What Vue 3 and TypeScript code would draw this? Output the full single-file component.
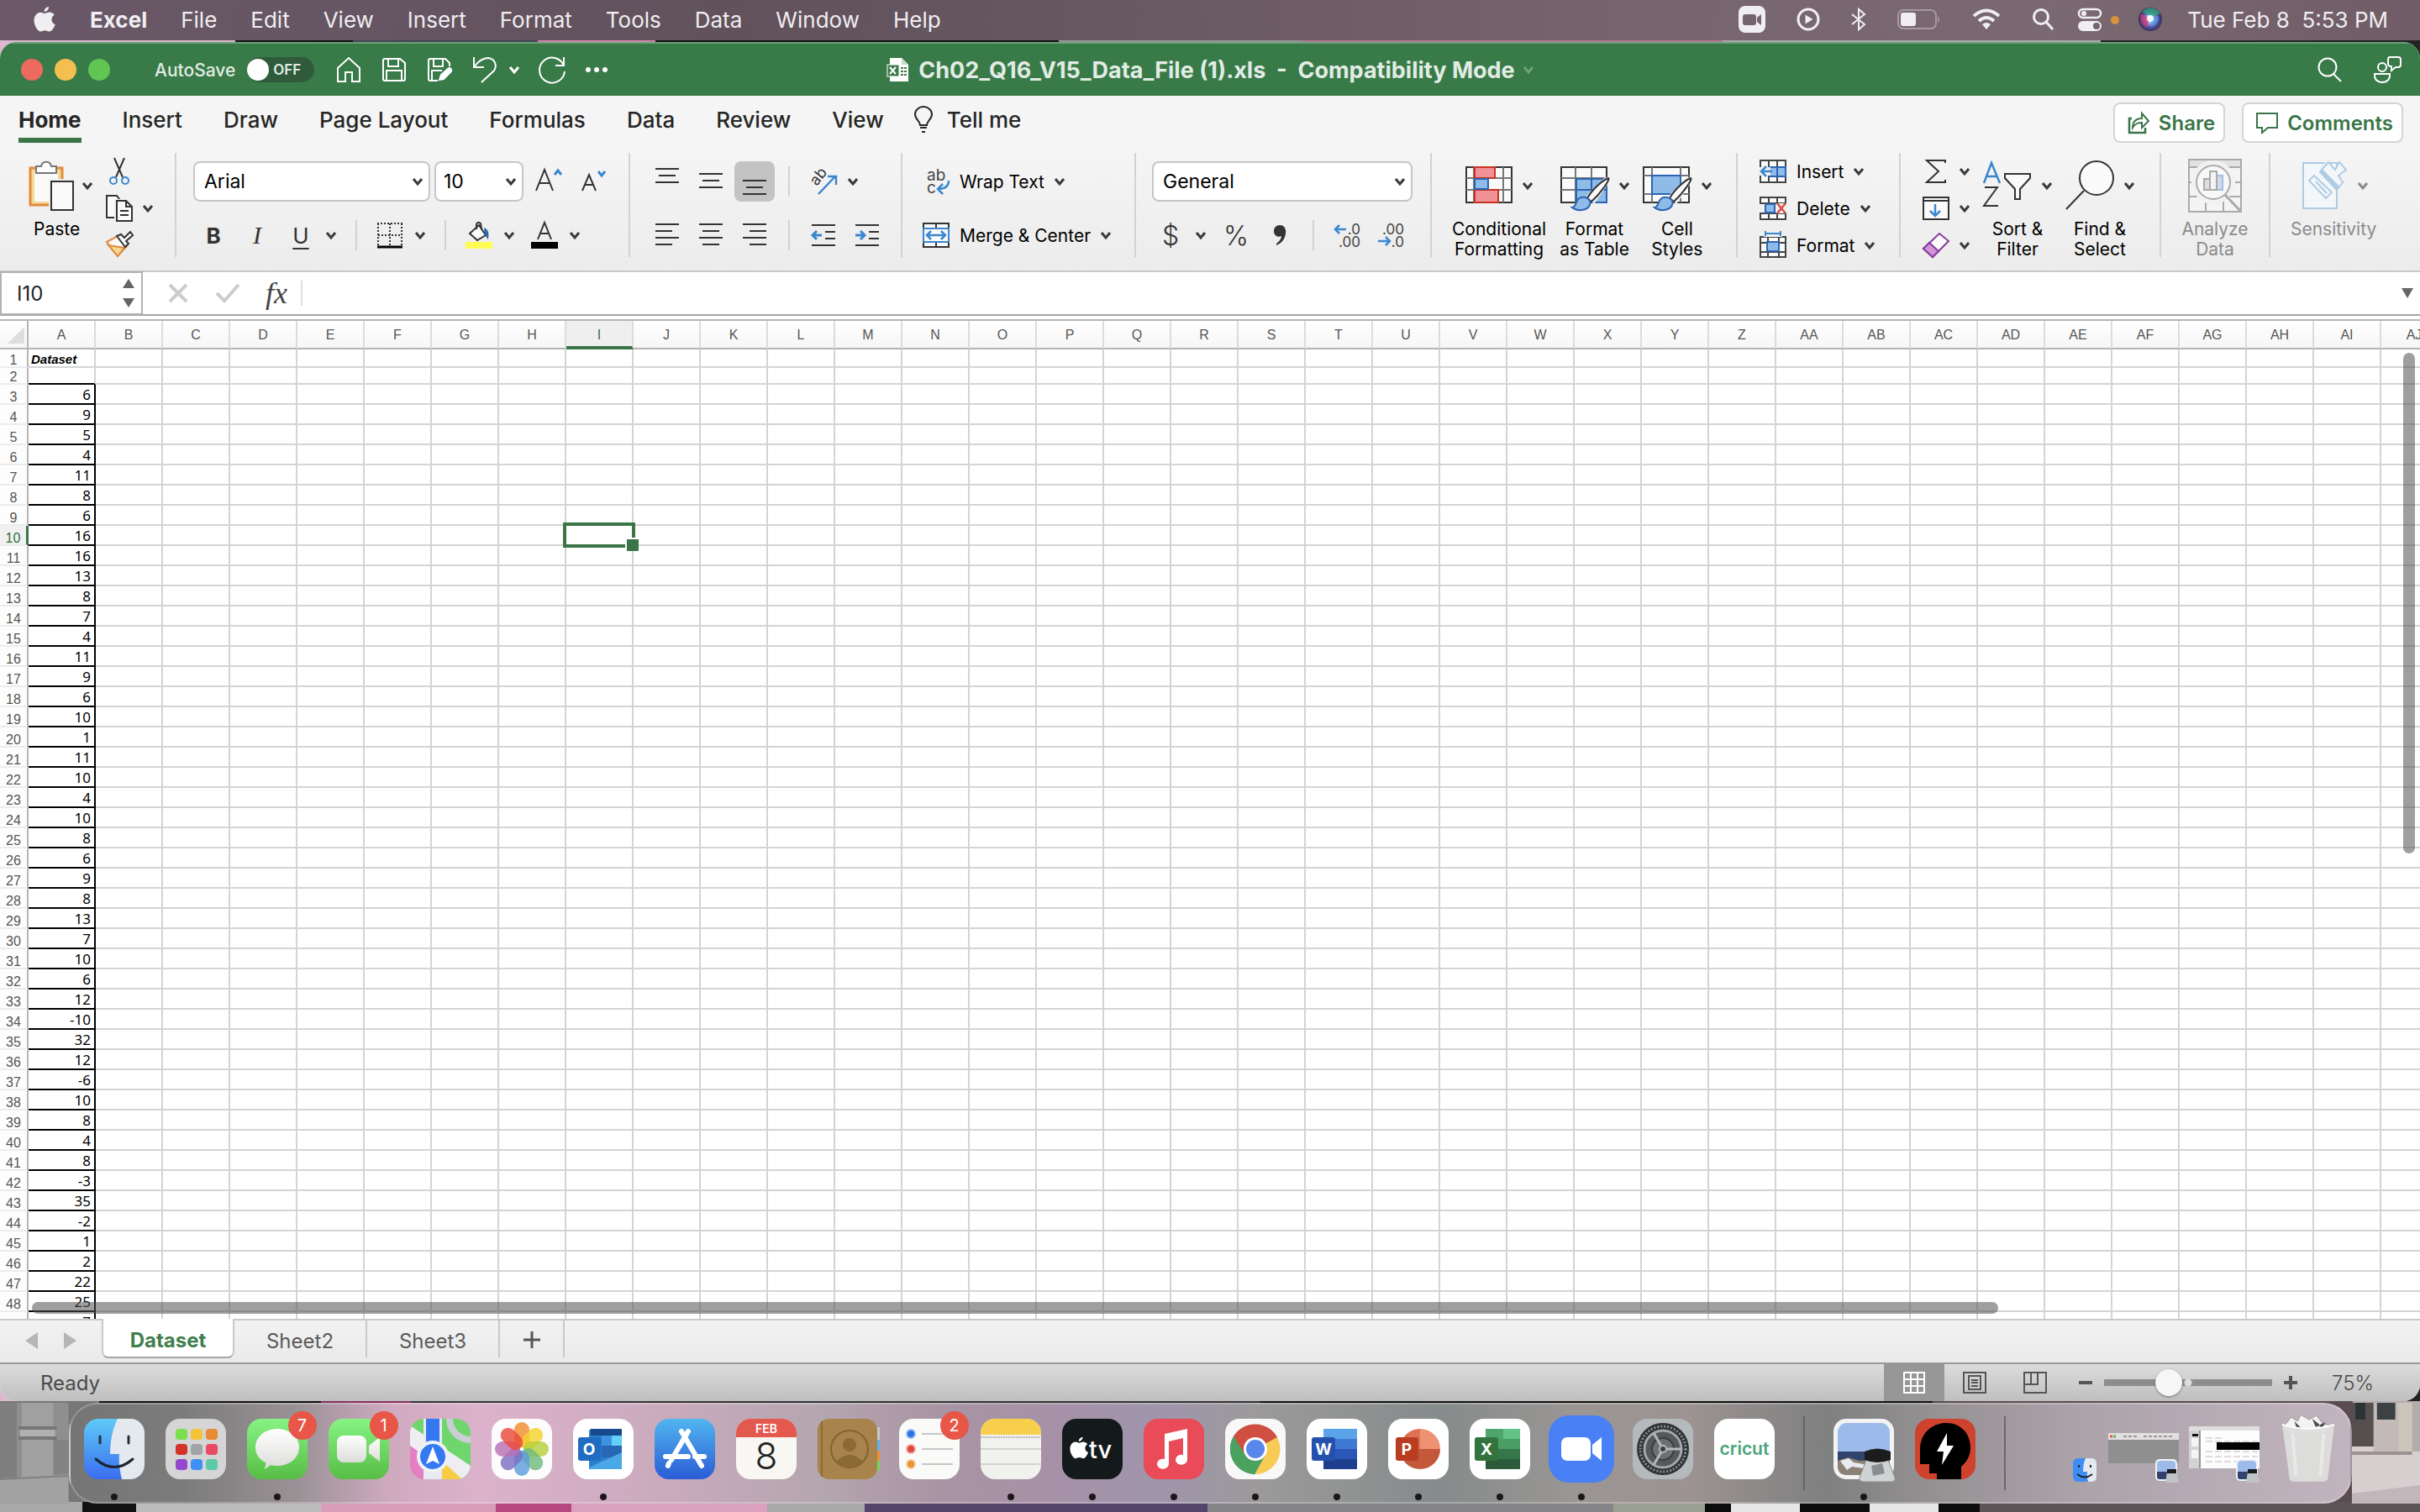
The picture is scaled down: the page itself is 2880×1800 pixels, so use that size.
<script setup lang="ts">
import { h, ref } from 'vue'

const menus = ['File', 'Edit', 'View', 'Insert', 'Format', 'Tools', 'Data', 'Window', 'Help']
const tabs = ['Home', 'Insert', 'Draw', 'Page Layout', 'Formulas', 'Data', 'Review', 'View']
const sheets = ['Dataset', 'Sheet2', 'Sheet3']
const activeTab = ref('Home')
const activeSheet = ref('Dataset')
const autoSave = ref(false)
const font = ref('Arial')
const size = ref('10')
const format = ref('General')
const cell = ref('I10')
const formula = ref('')
const zoom = ref(36)

const values = [
  6, 9, 5, 4, 11, 8, 6, 16, 16, 13, 8, 7, 4, 11, 9, 6, 10, 1, 11, 10, 4, 10, 8, 6, 9, 8, 13, 7, 10, 6,
  12, -10, 32, 12, -6, 10, 8, 4, 8, -3, 35, -2, 1, 2, 22, 25, 7,
]
const columnName = (i: number): string => (i < 26 ? '' : 'A') + String.fromCharCode(65 + (i % 26))
const columns = Array.from({ length: 36 }, (_, i) => columnName(i))
const rows = Array.from({ length: 49 }, (_, i) => ({
  n: i + 1,
  text: i === 0 ? 'Dataset' : i === 1 ? '' : String(values[i - 2]),
}))

const Chev = () =>
  h('svg', { class: 'chev', width: 12, height: 10, viewBox: '0 0 12 10', fill: 'none' }, [
    h('path', { d: 'M1 2l5 6 5-6', stroke: 'currentColor', 'stroke-width': 3 }),
  ])

const lines = (p: { xs: number[][]; top: number }) =>
  h(
    'svg',
    { width: 28, height: 48, viewBox: '0 0 28 48' },
    p.xs.map((r, i) => h('rect', { x: r[0], y: p.top + i * 8, width: r[1], height: 2, fill: '#333' })),
  )
const Lines = Object.assign(lines, { props: ['xs', 'top'] })

const petals = [
  ['#f08c2e', 0], ['#f2d32c', 45], ['#b5d03c', 90], ['#6fbb7c', 135],
  ['#5d9fdb', 180], ['#7d6fc4', 225], ['#bb6fb4', 270], ['#ea4b39', 315],
] as [string, number][]
const pads = ['#7be04f', '#f3c33c', '#e98a35', '#d23326', '#9fa4a6', '#ea4a62', '#9448cf', '#3f8ff5', '#5cc9a8']
const spokes = [0, 120, 240]
</script>

<template>
  <div class="desktop">
    <header class="menubar">
      <svg width="26" height="32" viewBox="0 0 26 32" fill="#f0eef0"><path d="M18 1c.3 3-2.600 6-5.300 6C12.300 4 15 1.500 18 1zM13.200 9c1.400 0 3-1.500 5.600-1.500 2 0 4.400 1 5.900 3.200-4.900 3-4 9.600 1 11.500-1.200 3.400-4 8.300-6.900 8.300-2 0-2.800-1.300-5.300-1.300s-3.500 1.300-5.300 1.300C5 30.500.500 23.500.500 17.500.500 11.500 4.300 7.700 8 7.700c2.300 0 4 1.300 5.200 1.300z" /></svg>
      <nav class="menus">
        <button class="app-name" type="button">Excel</button>
        <button v-for="m in menus" :key="m" type="button">{{ m }}</button>
      </nav>
      <div class="extras">
        <svg width="32" height="32" viewBox="0 0 32 32"><rect width="32" height="32" rx="8" fill="#f0eef0" /><rect x="5" y="10" width="16" height="13" rx="3" fill="#75646e" /><path d="M22 14l5-4v13l-5-4z" fill="#75646e" /></svg>
        <svg width="28" height="28" viewBox="0 0 28 28"><circle cx="14" cy="14" r="12" fill="none" stroke="#f0eef0" stroke-width="3" /><path d="M10.500 8.500v11l9-5.500z" fill="#f0eef0" /></svg>
        <svg width="18" height="28" viewBox="0 0 18 28" fill="none" stroke="#f0eef0" stroke-width="2"><path d="M1 8l15 12-7 6V2l7 6L1 20" /></svg>
        <svg width="52" height="24" viewBox="0 0 52 24"><rect x="1" y="1" width="45" height="22" rx="6" fill="none" stroke="#a898a1" stroke-width="2" /><rect x="4" y="4" width="18" height="16" rx="3" fill="#f0eef0" /><path d="M48 8q4 4 0 8z" fill="#a898a1" /></svg>
        <svg width="34" height="26" viewBox="0 0 34 26" fill="none" stroke="#f0eef0" stroke-width="4"><path d="M2 9q15-13 30 0M8 15q9-8 18 0" /><path d="M12 19q5-4 10 0l-5 6z" fill="#f0eef0" stroke="none" /></svg>
        <svg width="26" height="26" viewBox="0 0 26 26" fill="none" stroke="#f0eef0" stroke-width="3"><circle cx="11" cy="10" r="8.500" /><path d="M17 16l8 9" /></svg>
        <svg class="cc" width="50" height="28" viewBox="0 0 50 28"><rect x="1" y="2" width="26" height="10" rx="5" fill="none" stroke="#f0eef0" stroke-width="2.500" /><circle cx="7" cy="7" r="3" fill="#f0eef0" /><rect x="0" y="16" width="28" height="12" rx="6" fill="#f0eef0" /><circle cx="22" cy="22" r="4" fill="#75646e" /><circle cx="44" cy="15" r="5" fill="#d8933c" /></svg>
        <svg width="30" height="30" viewBox="0 0 30 30"><defs><radialGradient id="siri"><stop offset="0" stop-color="#fff" /><stop offset=".35" stop-color="#8fa6e6" /><stop offset=".7" stop-color="#4b4f9a" /><stop offset="1" stop-color="#3b2f5d" /></radialGradient></defs><circle cx="15" cy="15" r="14" fill="url(#siri)" /><path d="M5 6a14 14 0 0 1 22 2l-9 4z" fill="#2fa87a" opacity=".75" /><path d="M4 8l10 6-3 11Q1 19 4 8z" fill="#d23a72" opacity=".75" /><path d="M14 13l11-2q1 10-8 12z" fill="#4a9de8" opacity=".6" /><circle cx="15" cy="14" r="4" fill="#fff" opacity=".9" /></svg>
        <time>Tue Feb 8&nbsp; 5:53 PM</time>
      </div>
    </header>

    <main class="window">
      <div class="titlebar">
        <div class="title-left">
          <div class="lights">
            <button type="button" class="light red" aria-label="Close"></button>
            <button type="button" class="light amber" aria-label="Minimise"></button>
            <button type="button" class="light lime" aria-label="Zoom"></button>
          </div>
          <label class="autosave">AutoSave
            <span class="switch"><input v-model="autoSave" type="checkbox" /><span class="off">OFF</span></span>
          </label>
          <div class="quick">
            <button type="button" aria-label="Home"><svg width="32" height="32" viewBox="0 0 32 32"><path d="M3 14L16 2l13 12v16h-9V19h-8v11H3z" /></svg></button>
            <button type="button" aria-label="Save"><svg width="32" height="32" viewBox="0 0 32 32"><path d="M3 5q0-2 2-2h18l6 5v19q0 2-2 2H5q-2 0-2-2zM9 3v9h12V3M7 29V17h18v12" /></svg></button>
            <button type="button" aria-label="Save as"><svg width="32" height="32" viewBox="0 0 32 32"><path d="M14 29H5q-2 0-2-2V5q0-2 2-2h18l5 5v4M9 3v9h11V3M7 29V17h12" /><path d="M16 28l2-6 9-8q4 0 3 4l-9 9z" fill="#fff" /></svg></button>
            <button type="button" class="undo" aria-label="Undo"><svg width="32" height="32" viewBox="0 0 32 32"><path d="M3 1v12h12M3 13C8 6 13 2 20 2c8 1 11 9 7 15L12 31" /></svg><Chev /></button>
            <button type="button" aria-label="Redo"><svg width="34" height="34" viewBox="0 0 34 34"><path d="M31 2v10H21M31 12A15 15 0 1 0 32 19" /></svg></button>
            <button type="button" aria-label="More"><svg width="28" height="8" viewBox="0 0 28 8"><g fill="#fff" stroke="none"><circle cx="4" cy="4" r="3" /><circle cx="14" cy="4" r="3" /><circle cx="24" cy="4" r="3" /></g></svg></button>
          </div>
        </div>
        <h1 class="doc">
          <svg width="28" height="30" viewBox="0 0 28 30"><path d="M4 1h14l8 8v20H4z" fill="#fff" /><path d="M18 1l8 8h-8z" fill="#c9ddce" /><rect x="1" y="9" width="14" height="14" fill="#3b7b4a" stroke="#fff" /><path d="M4 12l7 8M11 12l-7 8" stroke="#fff" stroke-width="2" /><path d="M17 13h7M17 17h7M17 21h7" stroke="#3b7b4a" stroke-width="2" stroke-dasharray="3 1" /></svg>
          <span>Ch02_Q16_V15_Data_File (1).xls&nbsp; -&nbsp; Compatibility Mode</span>
          <Chev />
        </h1>
        <div class="title-right">
          <button type="button" aria-label="Search"><svg width="30" height="30" viewBox="0 0 30 30"><circle cx="12" cy="12" r="10.500" /><path d="M19 20l9 9" /></svg></button>
          <button type="button" aria-label="Presence"><svg width="34" height="34" viewBox="0 0 34 34"><circle cx="11" cy="14" r="5" /><path d="M2 22h18v2c0 5-4 8-9 8s-9-3-9-8zM20 2h10q3 0 3 3v6q0 3-3 3h-3l-5 4v-5q-4 0-4-3V5q0-3 2-3z" /></svg></button>
        </div>
      </div>

      <div class="tabs">
        <nav class="tab-list">
          <button v-for="t in tabs" :key="t" type="button" :class="{ on: t === activeTab }" @click="activeTab = t">{{ t }}</button>
          <button type="button" class="tell">
            <svg width="24" height="32" viewBox="0 0 24 32" fill="none" stroke="#262626" stroke-width="2"><path d="M8 23c0-5-6-7-6-13a10 9 0 0 1 20 0c0 6-6 8-6 13zM8 26h8M10 31h4" /></svg>Tell me
          </button>
        </nav>
        <div class="actions">
          <button type="button"><svg width="28" height="28" viewBox="0 0 28 28" fill="none" stroke="#3a7548" stroke-width="2.500"><path d="M6 9H3v17h19v-6" /><path d="M7 20c0-8 5-11 11-11V3l8 9-8 8v-6c-5 0-8 1-11 6z" stroke-width="2" /></svg>Share</button>
          <button type="button"><svg width="28" height="28" viewBox="0 0 28 28" fill="none" stroke="#3a7548" stroke-width="2"><path d="M2 3h24v17H15l-7 6v-6H2z" /></svg>Comments</button>
        </div>
      </div>

      <section class="ribbon">
        <div class="group clip">
          <button type="button" class="big">
            <span class="face"><svg width="54" height="60" viewBox="0 0 54 60"><path d="M2 9h38v44H2z" fill="#f5d992" stroke="#e08b3c" stroke-width="3" /><path d="M7 14h28v35H7z" fill="#fafafa" /><path d="M9 15V7h6c1-7 11-7 12 0h6v8z" fill="#fff" stroke="#777" stroke-width="2" /><path d="M24 22h30v38H24z" fill="#f0f0f0" /><path d="M27 25h26v34H27z" fill="#fafafa" stroke="#333" stroke-width="2" /></svg><Chev /></span>
            <span class="cap">Paste</span>
          </button>
          <div class="stack">
            <button type="button" aria-label="Cut"><svg width="32" height="34" viewBox="0 0 32 34" fill="none"><path d="M10 1l10 23M22 1L12 24" stroke="#333" stroke-width="2" /><circle cx="9" cy="28" r="4" stroke="#3b86cf" stroke-width="2" /><circle cx="23" cy="28" r="4" stroke="#3b86cf" stroke-width="2" /></svg></button>
            <button type="button" class="split" aria-label="Copy"><svg width="32" height="34" viewBox="0 0 32 34" fill="#fafafa" stroke="#333" stroke-width="2"><path d="M1 2h12l3 4v22H1z" /><path d="M10 6h22v28H10z" fill="#f0f0f0" stroke="none" /><path d="M13 8h11l7 7v17H13zM24 8v7h7M17 20h10M17 25h10" /></svg><Chev /></button>
            <button type="button" aria-label="Format painter"><svg width="32" height="32" viewBox="0 0 32 32"><path d="M1 12l13-7 11 12-11 12z" fill="#fafafa" stroke="#e08b3c" stroke-width="2" /><path d="M3 16l19 3-8 10z" fill="#f5d992" stroke="#e08b3c" stroke-width="2" /><path d="M13 5l5-2 4 4 7-7 3 4-8 7 3 3-4 4z" fill="#fafafa" stroke="#333" stroke-width="2" /></svg></button>
          </div>
        </div>

        <div class="group fonts">
          <div class="row tall">
            <label class="pick wide"><select v-model="font" aria-label="Font"><option>Arial</option><option>Calibri</option></select><Chev /></label>
            <label class="pick small"><select v-model="size" aria-label="Font size"><option>10</option><option>11</option></select><Chev /></label>
            <button type="button" class="grow" aria-label="Increase font size"><svg width="34" height="34" viewBox="0 0 34 34" fill="none" stroke="#333" stroke-width="2"><path d="M2 28L12 3l10 25M6 19h12" /><path d="M24 9l4-5 4 5" stroke="#3b86cf" stroke-width="3" /></svg></button>
            <button type="button" class="grow" aria-label="Decrease font size"><svg width="34" height="34" viewBox="0 0 34 34" fill="none" stroke="#333" stroke-width="2"><path d="M4 28L12 9l8 19M7 21h10" /><path d="M23 5l4 5 4-5" stroke="#3b86cf" stroke-width="3" /></svg></button>
          </div>
          <div class="row gap20">
            <button type="button" class="ico"><b>B</b></button>
            <button type="button" class="ico serif"><i>I</i></button>
            <button type="button" class="split"><span class="ico under">U</span><Chev /></button>
            <hr />
            <button type="button" class="split" aria-label="Borders"><svg width="32" height="32" viewBox="0 0 32 32" fill="none" stroke="#333" stroke-width="2"><path d="M1 2h30M2 2v26M30 2v26M16 2v26M2 16h28" stroke-dasharray="2 2" /><path d="M1 30h30" stroke="#000" stroke-width="3" /></svg><Chev /></button>
            <hr />
            <button type="button" class="split" aria-label="Fill colour"><svg width="32" height="34" viewBox="0 0 32 34" fill="none"><path d="M5 15L16 5l8 12-10 6z" fill="#fafafa" stroke="#333" stroke-width="2" /><path d="M13 10V4q2-4 5-1l1 7" stroke="#333" stroke-width="2" /><path d="M22 8q7 2 5 14l-4-5z" fill="#2b65b3" /><rect y="25" width="32" height="8" fill="#fffd54" /></svg><Chev /></button>
            <button type="button" class="split" aria-label="Font colour"><svg width="32" height="34" viewBox="0 0 32 34" fill="none" stroke="#333" stroke-width="2"><path d="M8 22L16 2l8 20M11 15h10" /><rect y="25" width="32" height="8" fill="#000" stroke="none" /></svg><Chev /></button>
          </div>
        </div>

        <div class="group aligns">
          <div class="row tall gap4">
            <button type="button" class="sq" aria-label="Top align"><Lines :xs="[[0, 28], [4, 20], [0, 28]]" :top="8" /></button>
            <button type="button" class="sq" aria-label="Middle align"><Lines :xs="[[0, 28], [4, 20], [0, 28]]" :top="14" /></button>
            <button type="button" class="sq pressed" aria-label="Bottom align"><Lines :xs="[[0, 28], [4, 20], [0, 28]]" :top="22" /></button>
            <hr />
            <button type="button" class="split orient" aria-label="Orientation"><svg width="36" height="36" viewBox="0 0 36 36"><text x="10" y="24" transform="rotate(-52 10 24)" font-family="Inter" font-size="18" fill="#333">ab</text><path d="M12 33L32 12M23 12h10v10" fill="none" stroke="#3b86cf" stroke-width="2.500" /></svg><Chev /></button>
          </div>
          <div class="row gap4">
            <button type="button" class="sq" aria-label="Left"><Lines :xs="[[0, 28], [0, 20], [0, 28], [0, 20]]" :top="10" /></button>
            <button type="button" class="sq" aria-label="Centre"><Lines :xs="[[0, 28], [4, 20], [0, 28], [4, 20]]" :top="10" /></button>
            <button type="button" class="sq" aria-label="Right"><Lines :xs="[[0, 28], [8, 20], [0, 28], [8, 20]]" :top="10" /></button>
            <hr />
            <button type="button" class="sq" aria-label="Decrease indent"><svg width="30" height="28" viewBox="0 0 30 28" fill="none" stroke="#333" stroke-width="2"><path d="M1 2h28M17 10h12M17 18h12M1 26h28" /><path d="M7 9l-5 5 5 5M2 14h11" stroke="#3b86cf" stroke-width="3" /></svg></button>
            <button type="button" class="sq" aria-label="Increase indent"><svg width="30" height="28" viewBox="0 0 30 28" fill="none" stroke="#333" stroke-width="2"><path d="M1 2h28M17 10h12M17 18h12M1 26h28" /><path d="M7 9l5 5-5 5M1 14h11" stroke="#3b86cf" stroke-width="3" /></svg></button>
          </div>
        </div>

        <div class="group wraps">
          <div class="row tall">
            <button type="button" class="line"><svg width="32" height="40" viewBox="0 0 32 40"><text font-family="Inter" font-size="19" fill="#444"><tspan x="5" y="19">ab</tspan><tspan x="5" y="34">c</tspan></text><path d="M31 19q0 10-13 10M24 23l-6 6 6 6" fill="none" stroke="#3b86cf" stroke-width="2.500" /></svg>Wrap Text<Chev /></button>
          </div>
          <div class="row">
            <button type="button" class="line"><svg width="32" height="32" viewBox="0 0 32 32" fill="#fafafa" stroke="#333" stroke-width="2"><path d="M1 2h30v28H1zM16 2v28" /><path d="M1 8h30v16H1z" stroke="#3b86cf" /><path d="M5 16h22M10 11l-5 5 5 5M22 11l5 5-5 5" fill="none" stroke="#3b86cf" stroke-width="2.500" /></svg>Merge &amp; Center<Chev /></button>
          </div>
        </div>

        <div class="group numbers">
          <div class="row tall">
            <label class="pick format"><select v-model="format" aria-label="Number format"><option>General</option><option>Number</option></select><Chev /></label>
          </div>
          <div class="row gap20 inset">
            <button type="button" class="split"><span class="ico symbol">$</span><Chev /></button>
            <button type="button" class="ico symbol">%</button>
            <button type="button" class="ico" aria-label="Comma style"><svg width="16" height="26" viewBox="0 0 16 26"><path d="M8 1c5 0 8 4 7 10-1 7-5 12-11 14v-2c4-3 6-6 6-9-4 2-9 0-9-6 0-4 3-7 7-7z" fill="#333" /></svg></button>
            <hr />
            <button type="button" class="ico" aria-label="Increase decimal"><svg width="34" height="40" viewBox="0 0 34 40"><text font-family="Inter" font-size="17" fill="#444" text-anchor="end"><tspan x="33" y="19">.0</tspan><tspan x="33" y="34">.00</tspan></text><path d="M8 8l-5 5 5 5M3 13h13" fill="none" stroke="#3b86cf" stroke-width="2.500" /></svg></button>
            <button type="button" class="ico" aria-label="Decrease decimal"><svg width="34" height="40" viewBox="0 0 34 40"><text font-family="Inter" font-size="17" fill="#444" text-anchor="end"><tspan x="33" y="19">.00</tspan><tspan x="33" y="34">.0</tspan></text><path d="M11 22l5 5-5 5M2 27h13" fill="none" stroke="#3b86cf" stroke-width="2.500" /></svg></button>
          </div>
        </div>

        <div class="group styles">
          <button type="button" class="big">
            <span class="face"><svg width="56" height="60" viewBox="0 0 56 60" stroke-width="2"><path d="M1 8h54v42H1z" fill="#fafafa" stroke="#333" /><path d="M45 8v42M1 21h54M1 35h54M10 8v42" fill="none" stroke="#777" /><path d="M11 8h24v13H11zM11 35h28v15H11z" fill="#ef9197" stroke="#c8321f" /><path d="M11 22h16v12H11z" fill="#8fbbe8" stroke="#2b65b3" /></svg><Chev /></span>
            <span class="cap">Conditional<br />Formatting</span>
          </button>
          <button type="button" class="big">
            <span class="face"><svg width="58" height="60" viewBox="0 0 58 60" stroke-width="2"><path d="M1 8h54v42H1z" fill="#fafafa" stroke="#333" /><path d="M1 21h54M1 35h54M18 8v42M37 8v42" fill="none" stroke="#777" /><path d="M19 22h36v28H19zM19 35h36M37 22v28" fill="#8fbbe8" stroke="#2b65b3" /><path d="M31 42L52 21q8-4 8 2L40 52z" fill="#f0f0f0" /><path d="M32 45C37 36 49 24 57 21c3 1-9 18-20 28z" fill="#fafafa" stroke="#333" /><path d="M14 56c6 0 3-11 11-12 8-1 12 4 10 9-3 7-15 8-21 3z" fill="#8fbbe8" stroke="#2b65b3" /></svg><Chev /></span>
            <span class="cap">Format<br />as Table</span>
          </button>
          <button type="button" class="big">
            <span class="face"><svg width="58" height="60" viewBox="0 0 58 60" stroke-width="2"><path d="M1 8h54v42H1z" fill="#fafafa" stroke="#333" /><path d="M1 18h54M1 40h54M11 8v42M45 8v42" fill="none" stroke="#777" /><path d="M11 18h34v22H11z" fill="#8fbbe8" stroke="#2b65b3" /><path d="M31 42L52 21q8-4 8 2L40 52z" fill="#f0f0f0" /><path d="M32 45C37 36 49 24 57 21c3 1-9 18-20 28z" fill="#fafafa" stroke="#333" /><path d="M14 56c6 0 3-11 11-12 8-1 12 4 10 9-3 7-15 8-21 3z" fill="#8fbbe8" stroke="#2b65b3" /></svg><Chev /></span>
            <span class="cap">Cell<br />Styles</span>
          </button>
        </div>

        <div class="group cells">
          <div class="stack">
            <button type="button" class="line"><svg width="32" height="32" viewBox="0 0 32 32" stroke-width="2"><path d="M1 3h30v26H1zM11 3v26M21 3v26" fill="#fafafa" stroke="#444" /><path d="M12 11h19v11H12zM21 11v11" fill="#8fbbe8" stroke="#2b65b3" /><path d="M0 11h13v10H0z" fill="#f0f0f0" /><path d="M8 10l-6 6 6 6M2 16h13" fill="none" stroke="#3b86cf" stroke-width="2.500" /></svg>Insert<Chev /></button>
            <button type="button" class="line"><svg width="32" height="32" viewBox="0 0 32 32" stroke-width="2"><path d="M1 3h30v7H1zM1 22h30v7H1zM11 3v7M21 3v7M11 22v7M21 22v7" fill="#fafafa" stroke="#444" /><path d="M7 11h11v10H7z" fill="#8fbbe8" stroke="#2b65b3" /><path d="M20 10h12v12H20z" fill="#f0f0f0" /><path d="M21 10l10 12M31 10L21 22" stroke="#d94b41" stroke-width="2.500" /></svg>Delete<Chev /></button>
            <button type="button" class="line"><svg width="32" height="32" viewBox="0 0 32 32" stroke-width="2"><path d="M1 6h30v24H1zM10 6v24M23 6v24M1 13h30M1 24h30" fill="#fafafa" stroke="#444" /><path d="M9 12h14v11H9z" fill="#8fbbe8" stroke="#2b65b3" /><path d="M5-1h22v7H5z" fill="#f1f1f1" /><path d="M7 2h18M7-1v6M25-1v6" stroke="#3b86cf" /></svg>Format<Chev /></button>
          </div>
        </div>

        <div class="group edit">
          <div class="stack">
            <button type="button" class="split" aria-label="AutoSum"><svg width="32" height="32" viewBox="0 0 32 32" fill="none" stroke="#333" stroke-width="2"><path d="M27 6V3H5l14 13L5 29h22v-3" /></svg><Chev /></button>
            <button type="button" class="split" aria-label="Fill"><svg width="32" height="32" viewBox="0 0 32 32" fill="#fafafa" stroke="#333" stroke-width="2"><path d="M1 3h30v26H1zM1 7h30" /><path d="M15 11v14M9 19l6 6 6-6" fill="none" stroke="#3b86cf" stroke-width="2.500" /></svg><Chev /></button>
            <button type="button" class="split" aria-label="Clear"><svg width="32" height="32" viewBox="0 0 32 32" fill="#fafafa" stroke="#8a3a9e" stroke-width="2"><path d="M1 20L20 2l11 9-19 19z" /><path d="M1 20l7-7 11 10-7 7z" fill="#cf97d8" /></svg><Chev /></button>
          </div>
          <button type="button" class="big">
            <span class="face"><svg width="58" height="60" viewBox="0 0 58 60" fill="none" stroke="#333" stroke-width="2"><path d="M1 27L10 3l10 24M4 19h12" stroke="#3b86cf" stroke-width="2.500" /><path d="M2 32h15L1 54h17" /><path d="M26 16h30v5L44 34v12h-6V34L26 21z" fill="#fafafa" /></svg><Chev /></span>
            <span class="cap">Sort &amp;<br />Filter</span>
          </button>
          <button type="button" class="big">
            <span class="face"><svg width="58" height="60" viewBox="0 0 58 60" fill="#fafafa" stroke="#333" stroke-width="2"><circle cx="37" cy="21" r="20" /><path d="M22 36L1 58" /></svg><Chev /></span>
            <span class="cap">Find &amp;<br />Select</span>
          </button>
        </div>

        <div class="group analyze">
          <button type="button" class="big dim">
            <span class="face"><svg width="64" height="64" viewBox="0 0 64 64" fill="#f4f4f4" stroke="#aaa" stroke-width="2"><path d="M1 1h62v62H1zM1 10h62M1 28h62M1 45h62M21 45v18M42 45v18" /><path d="M2 2h60v7H2z" fill="#e2e2e0" stroke="none" /><circle cx="30" cy="28" r="24" stroke="#f2f2f2" stroke-width="4" /><circle cx="30" cy="28" r="20" fill="#f8f8f8" /><path d="M44 43l19 20" stroke-width="3" /><path d="M19 24h7v13h-7z" fill="#ddd" /><path d="M34 20h7v17h-7z" fill="#cddcf0" stroke="#a5bddb" /><path d="M26 15h8v22h-8z" /></svg></span>
            <span class="cap">Analyze<br />Data</span>
          </button>
        </div>

        <div class="group sens">
          <button type="button" class="big dim">
            <span class="face"><svg width="58" height="60" viewBox="0 0 58 60" fill="#f4f7fa" stroke="#afcce4" stroke-width="2"><path d="M5 3h40v54H5z" /><path d="M26 6l8-5 24 26-10 8z" fill="#f1f1f1" stroke="none" /><path d="M18 18l21 20-7 7-20-21zM20 25l13 14" /><path d="M27 11l8-9 8 9 5-9 8 9-9 7 5 8-6 8z" /><path d="M27 11l20 20-3 3-19-20z" fill="#afcce4" /></svg><Chev /></span>
            <span class="cap">Sensitivity</span>
          </button>
        </div>
      </section>

      <div class="formula">
        <label class="name-box">
          <input v-model="cell" type="text" aria-label="Name box" />
          <svg width="14" height="36" viewBox="0 0 14 36" fill="#666"><path d="M7 1l7 11H0zM7 35l7-11H0z" /></svg>
        </label>
        <button type="button" aria-label="Cancel"><svg width="28" height="28" viewBox="0 0 28 28" stroke="#ccc" stroke-width="4"><path d="M4 4l20 20M24 4L4 24" /></svg></button>
        <button type="button" aria-label="Enter"><svg width="30" height="28" viewBox="0 0 30 28" fill="none" stroke="#ccc" stroke-width="4"><path d="M2 14l9 9L28 4" /></svg></button>
        <button type="button" class="fx">fx</button>
        <input v-model="formula" class="entry" type="text" aria-label="Formula" />
        <button type="button" aria-label="Expand"><svg width="14" height="12" viewBox="0 0 14 12" fill="#666"><path d="M0 0h14L7 12z" /></svg></button>
      </div>

      <div class="grid">
        <table>
          <thead>
            <tr>
              <th class="corner"><svg width="20" height="20" viewBox="0 0 20 20"><path d="M20 0v20H0z" fill="#dedede" /></svg></th>
              <th v-for="c in columns" :key="c" :class="{ on: c === 'I' }">{{ c }}</th>
            </tr>
          </thead>
          <tbody>
            <tr v-for="r in rows" :key="r.n" :class="'r' + Math.min(r.n, 3)">
              <th :class="{ on: r.n === 10 }">{{ r.n }}</th>
              <td v-for="c in columns" :key="c" :class="{ a: c === 'A', boxed: c === 'A' && r.n > 2, cap2: c === 'A' && r.n === 2 }"><template v-if="c === 'A'">{{ r.text }}</template><span v-if="c === 'I' && r.n === 10" class="picked"></span></td>
            </tr>
          </tbody>
        </table>
        <div class="vbar"></div>
        <div class="hbar"></div>
      </div>

      <div class="sheets">
        <div class="arrows">
          <button type="button" aria-label="Previous sheet"><svg width="16" height="20" viewBox="0 0 16 20"><path d="M15 0v20L0 10z" fill="#b5b5b5" /></svg></button>
          <button type="button" aria-label="Next sheet"><svg width="16" height="20" viewBox="0 0 16 20"><path d="M1 0v20l15-10z" fill="#b5b5b5" /></svg></button>
        </div>
        <button v-for="s in sheets" :key="s" type="button" class="sheet" :class="{ on: s === activeSheet }" @click="activeSheet = s">{{ s }}</button>
        <button type="button" class="add" aria-label="Add sheet"><svg width="20" height="20" viewBox="0 0 20 20"><path d="M10 0v20M0 10h20" stroke="#555" stroke-width="3" /></svg></button>
      </div>

      <footer class="status">
        <span>Ready</span>
        <div class="views">
          <button type="button" class="view on" aria-label="Normal"><svg width="26" height="26" viewBox="0 0 26 26" fill="none" stroke="#fff" stroke-width="2"><path d="M1 1h24v24H1zM9 1v24M17 1v24M1 9h24M1 17h24" /></svg></button>
          <button type="button" class="view" aria-label="Page layout"><svg width="28" height="26" viewBox="0 0 28 26" fill="none" stroke="#555" stroke-width="2"><path d="M1 1h26v24H1zM7 5h14v16H7zM10 10h8M10 13h8M10 17h8" /></svg></button>
          <button type="button" class="view" aria-label="Page break"><svg width="28" height="26" viewBox="0 0 28 26" fill="none" stroke="#555" stroke-width="2"><path d="M1 1h26v24H1zM1 15h16V1M9 1v14" /></svg></button>
        </div>
        <div class="zoomer">
          <button type="button" aria-label="Zoom out"><svg width="16" height="16" viewBox="0 0 16 16"><path d="M0 8h16" stroke="#555" stroke-width="4" /></svg></button>
          <input v-model="zoom" type="range" min="0" max="100" aria-label="Zoom level" />
          <button type="button" aria-label="Zoom in"><svg width="16" height="16" viewBox="0 0 16 16"><path d="M0 8h16M8 0v16" stroke="#555" stroke-width="4" /></svg></button>
          <output>75%</output>
        </div>
      </footer>
    </main>

    <div class="shore">
      <svg class="scene" viewBox="0 0 82 120" preserveAspectRatio="none"><path d="M0 0h82v120H0z" fill="#8f8f8f" /><path d="M0 0h20v92H0z" fill="#7f7f7f" /><path d="M26 0h38v92H26z" fill="#a0a0a0" /><path d="M22 28h46v4H22zM22 40h46v4H22z" fill="#777" /><path d="M24 32h42v8H24z" fill="#b0b0b0" /><path d="M64 44h18v46H64z" fill="#848484" /><path d="M0 90l82-5v35H0z" fill="#a2a2a2" /><path d="M0 91l82-4" stroke="#808080" stroke-width="2" /></svg>
      <nav class="dock">
        <a href="#finder" class="app run" aria-label="Finder"><svg viewBox="0 0 72 72"><defs><linearGradient id="fin" x1="0" y1="0" x2="0" y2="1"><stop offset="0" stop-color="#5ecbf8" /><stop offset="1" stop-color="#3a6df0" /></linearGradient><linearGradient id="grn" x1="0" y1="0" x2="0" y2="1"><stop offset="0" stop-color="#86f383" /><stop offset="1" stop-color="#57bd45" /></linearGradient><linearGradient id="wht" x1="0" y1="0" x2="0" y2="1"><stop offset="0" stop-color="#fff" /><stop offset="1" stop-color="#dcdcda" /></linearGradient><linearGradient id="sky" x1="0" y1="0" x2="0" y2="1"><stop offset="0" stop-color="#51b5ef" /><stop offset="1" stop-color="#2a5cd6" /></linearGradient><clipPath id="sq"><rect width="72" height="72" rx="17" /></clipPath></defs><g clip-path="url(#sq)"><path d="M0 0h72v72H0z" fill="url(#fin)" /><path d="M40 0h32v72H45c-2-8-4-20-3-30H31C31 26 34 12 40 0z" fill="#e4e9ef" /><path d="M19 21v8M53 21v8" stroke="#23303c" stroke-width="3" stroke-linecap="round" /><path d="M14 48q22 19 44 0" fill="none" stroke="#1c242c" stroke-width="3" stroke-linecap="round" /></g></svg></a>
        <a href="#launchpad" class="app" aria-label="Launchpad"><svg viewBox="0 0 72 72"><rect width="72" height="72" rx="17" fill="#d5d5d6" /><rect v-for="(p, i) in pads" :key="p" :x="12 + (i % 3) * 18" :y="12 + Math.floor(i / 3) * 18" width="14" height="13" rx="4" :fill="p" /></svg></a>
        <a href="#messages" class="app run" aria-label="Messages"><svg viewBox="0 0 72 72"><rect width="72" height="72" rx="17" fill="url(#grn)" /><path d="M36 12c15 0 26 10 26 22S51 56 36 56q-5 0-8-1-4 4-8 5 3-4 2-8C14 48 10 42 10 34c0-12 11-22 26-22z" fill="url(#wht)" /></svg><em>7</em></a>
        <a href="#facetime" class="app" aria-label="FaceTime"><svg viewBox="0 0 72 72"><rect width="72" height="72" rx="17" fill="url(#grn)" /><rect x="10" y="20" width="35" height="32" rx="8" fill="url(#wht)" /><path d="M48 32l13-10v29L48 41z" fill="url(#wht)" /></svg><em>1</em></a>
        <a href="#maps" class="app" aria-label="Maps"><svg viewBox="0 0 72 72"><g clip-path="url(#sq)"><path d="M0 0h72v72H0z" fill="#6fd56d" /><path d="M0 30l20 12v30H0z" fill="#e47fc3" /><path d="M0 8l72 48v16H58L0 32z" fill="#eeeef2" /><path d="M38 50l24 22H38z" fill="#f6cd45" /><path d="M16 0h22v72H16z" fill="#e9eaf0" /><path d="M19 0h16v40H19z" fill="#3577f0" /><circle cx="72" cy="0" r="25" fill="none" stroke="#c9ced2" stroke-width="8" /><circle cx="27" cy="45" r="17" fill="#3478f2" stroke="#eef1f6" stroke-width="4" /><path d="M27 33l8 21-8-4-8 4z" fill="#fff" /></g></svg></a>
        <a href="#photos" class="app" aria-label="Photos"><svg viewBox="0 0 72 72"><rect width="72" height="72" rx="17" fill="#fcfcfc" /><rect v-for="p in petals" :key="p[1]" x="27" y="4" width="18" height="30" rx="9" :fill="p[0]" opacity=".82" :transform="`rotate(${p[1]} 36 36)`" /></svg></a>
        <a href="#outlook" class="app run" aria-label="Outlook"><svg viewBox="0 0 72 72"><rect width="72" height="72" rx="17" fill="#fff" /><path d="M21 12h37v48H19V14z" fill="#2c7fd0" /><path d="M21 12h37v8H21z" fill="#174a8c" /><path d="M34 20h12v12H34z" fill="#3d93df" /><path d="M46 20h12v12H46z" fill="#64d0f8" /><path d="M34 32h24v14H34z" fill="#2767b5" /><path d="M19 58l39-18v20H21z" fill="#4aa8e6" /><rect x="6" y="22" width="27" height="28" rx="3" fill="#1f6cc0" /><text x="19" y="43" text-anchor="middle" font-family="Inter" font-weight="700" font-size="19" fill="#fff">O</text></svg></a>
        <a href="#appstore" class="app" aria-label="App Store"><svg viewBox="0 0 72 72"><rect width="72" height="72" rx="17" fill="url(#sky)" /><path d="M40 15L20 49M32 15l24 41M13 45h27M48 45h11M17 53l-1 3" stroke="#fff" stroke-width="6" stroke-linecap="round" /></svg></a>
        <a href="#calendar" class="app" aria-label="Calendar"><svg viewBox="0 0 72 72"><g clip-path="url(#sq)"><path d="M0 0h72v72H0z" fill="#f8f7f4" /><path d="M0 0h72v22H0z" fill="#e3594e" /></g><text x="36" y="17" text-anchor="middle" font-family="Inter" font-weight="600" font-size="14" fill="#fff">FEB</text><text x="36" y="60" text-anchor="middle" font-family="Inter" font-size="44" font-weight="300" fill="#222">8</text></svg></a>
        <a href="#contacts" class="app" aria-label="Contacts"><svg viewBox="0 0 72 72"><path d="M62 10h12v18H62z" fill="#c9c9c9" /><path d="M62 25h12v13H62z" fill="#5bb5ea" /><path d="M62 38h12v12H62z" fill="#ee8f31" /><path d="M62 50h12v12H62z" fill="#75d564" /><rect width="71" height="72" rx="14" fill="#a8834b" /><path d="M5 3v66" stroke="#8c6b39" stroke-width="2" /><circle cx="38" cy="36" r="22" fill="none" stroke="#84632f" stroke-width="2" /><circle cx="38" cy="31" r="8" fill="#8c6a36" /><path d="M22 51q16-16 32 0-16 14-32 0z" fill="#8c6a36" /></svg></a>
        <a href="#reminders" class="app" aria-label="Reminders"><svg viewBox="0 0 72 72"><rect width="72" height="72" rx="17" fill="#fafaf8" /><g stroke-width="2"><circle cx="14" cy="18" r="5" fill="#2d71e8" stroke="#9cbcf4" /><circle cx="14" cy="36" r="5" fill="#e1463b" stroke="#f2aaa5" /><circle cx="14" cy="54" r="5" fill="#ea942f" stroke="#f3cd9f" /><path d="M27 18h37M27 36h37M27 54h37" stroke="#c6c6c6" /></g></svg><em>2</em></a>
        <a href="#notes" class="app run" aria-label="Notes"><svg viewBox="0 0 72 72"><g clip-path="url(#sq)"><path d="M0 0h72v72H0z" fill="#f1f1ee" /><path d="M0 0h72v19H0z" fill="#f8cf4d" /><path d="M0 22h72" stroke="#bbb" stroke-width="2" stroke-dasharray="2 1" /><path d="M0 36h72M0 54h72" stroke="#d2d2cf" stroke-width="2" /></g></svg></a>
        <a href="#tv" class="app run" aria-label="TV"><svg viewBox="0 0 72 72"><rect width="72" height="72" rx="17" fill="#141a1b" /><g transform="translate(9 21) scale(.86)" fill="#fff"><path d="M18 1c.3 3-2.600 6-5.300 6C12.300 4 15 1.500 18 1zM13.200 9c1.400 0 3-1.500 5.600-1.500 2 0 4.400 1 5.900 3.200-4.900 3-4 9.600 1 11.500-1.200 3.400-4 8.300-6.900 8.300-2 0-2.800-1.300-5.300-1.300s-3.500 1.300-5.300 1.300C5 30.500.500 23.500.500 17.500.500 11.500 4.300 7.700 8 7.700c2.300 0 4 1.300 5.200 1.300z" /></g><text x="32" y="47" font-family="Inter" font-weight="500" font-size="29" fill="#fff">tv</text></svg></a>
        <a href="#music" class="app run" aria-label="Music"><svg viewBox="0 0 72 72"><rect width="72" height="72" rx="17" fill="#e94b58" /><path d="M25 18l27-6v37a7 6 0 1 1-5-6V23l-17 4v27a7 6 0 1 1-5-6z" fill="#fff" /></svg></a>
        <a href="#chrome" class="app run" aria-label="Chrome"><svg viewBox="0 0 72 72"><rect width="72" height="72" rx="17" fill="#f8f8f8" /><path d="M36 36L10 21a30 30 0 0 1 52 2z" fill="#cf5043" /><path d="M36 36L62 22a30 30 0 0 1-26 44z" fill="#f7cb56" /><path d="M36 36L36 66A30 30 0 0 1 10 21z" fill="#4ba160" /><path d="M36 22h26a30 30 0 0 0-52-1l14 24z" fill="#cf5043" /><path d="M48 43L35 66A30 30 0 0 1 10 21l14 22z" fill="#4ba160" /><circle cx="36" cy="36" r="14" fill="#fff" /><circle cx="36" cy="36" r="11" fill="#5887ee" /></svg></a>
        <a href="#word" class="app run" aria-label="Word"><svg viewBox="0 0 72 72"><rect width="72" height="72" rx="17" fill="#fff" /><path d="M20 12h40v12H20z" fill="#5ba4ea" /><path d="M20 24h40v12H20z" fill="#3f79d3" /><path d="M20 36h40v12H20z" fill="#2b57b9" /><path d="M20 48h40v12H20z" fill="#1f3d8d" /><rect x="6" y="22" width="28" height="28" rx="3" fill="#2451ae" /><text x="20" y="43" text-anchor="middle" font-family="Inter" font-weight="700" font-size="19" fill="#fff">W</text></svg></a>
        <a href="#powerpoint" class="app run" aria-label="PowerPoint"><svg viewBox="0 0 72 72"><rect width="72" height="72" rx="17" fill="#fff" /><path d="M38 36V12a24 24 0 0 0-24 24z" fill="#df7152" /><path d="M38 36V12a24 24 0 0 1 24 24z" fill="#ee9273" /><path d="M14 36h48a24 24 0 0 1-48 0z" fill="#c3583b" /><rect x="9" y="22" width="27" height="28" rx="3" fill="#b93d20" /><text x="22" y="43" text-anchor="middle" font-family="Inter" font-weight="700" font-size="19" fill="#fff">P</text></svg></a>
        <a href="#excel" class="app run" aria-label="Excel"><svg viewBox="0 0 72 72"><rect width="72" height="72" rx="17" fill="#fff" /><path d="M19 12h41v12H19z" fill="#4fa56b" /><path d="M40 12h20v12H40z" fill="#64c287" /><path d="M19 24h41v12H19z" fill="#4a9d65" /><path d="M19 36h41v12H19z" fill="#37764a" /><path d="M19 48h41v12H19z" fill="#2b5b3a" /><rect x="6" y="22" width="28" height="28" rx="3" fill="#33743e" /><text x="20" y="43" text-anchor="middle" font-family="Inter" font-weight="700" font-size="19" fill="#fff">X</text></svg></a>
        <a href="#zoom" class="app run" aria-label="Zoom"><svg viewBox="0 0 72 72"><rect x="-3" y="-4" width="78" height="80" rx="24" fill="#4a80f5" /><rect x="12" y="22" width="35" height="28" rx="7" fill="#fff" /><path d="M49 31l11-9v28l-11-9z" fill="#fff" /></svg></a>
        <a href="#settings" class="app" aria-label="System Preferences"><svg viewBox="0 0 72 72"><rect width="72" height="72" rx="17" fill="#b4babb" /><circle cx="36" cy="36" r="31" fill="#2f3234" /><circle cx="36" cy="36" r="27" fill="none" stroke="#8b8e90" stroke-width="3" stroke-dasharray="2 2" /><circle cx="36" cy="36" r="22" fill="#55595a" stroke="#a5a8aa" stroke-width="3" /><circle cx="36" cy="36" r="13" fill="#6c7072" stroke="#3a3d3e" stroke-width="2" /><path v-for="s in spokes" :key="s" d="M36 36h22" stroke="#b5b8b9" stroke-width="3" :transform="`rotate(${s} 36 36)`" /><circle cx="36" cy="36" r="4" fill="#3a3d3e" stroke="#b5b8b9" stroke-width="2" /></svg></a>
        <a href="#cricut" class="app" aria-label="Cricut"><svg viewBox="0 0 72 72"><rect width="72" height="72" rx="17" fill="#fff" /><text x="36" y="43" text-anchor="middle" font-family="Inter" font-weight="600" font-size="21" fill="#4ca57c">cricut</text></svg></a>
        <span class="bar"></span>
        <a href="#preview" class="app run" aria-label="Preview"><svg viewBox="0 0 72 72"><rect width="72" height="72" rx="15" fill="#f3f3f3" /><rect x="5" y="5" width="62" height="62" rx="11" fill="#9dbbea" /><path d="M5 39h62v12H5z" fill="#31426d" /><path d="M5 50l12-4 14 4 36-2v8q0 11-11 11H16Q5 67 5 56z" fill="#8b8176" /><path d="M8 50l10-3 6 5 12 2v5l-14-2-6 4z" fill="#e8ebef" /><path d="M39 49h26l8 21q1 5-5 5H36q-6 0-5-5z" fill="#cfd3d4" stroke="#8d9292" /><path d="M45 56l13-3 3 12-14 3z" fill="#8a8d8f" /><path d="M37 39q15-7 31 0v10q-16 6-31 0z" fill="#1c1c1d" /></svg></a>
        <a href="#brainstorm" class="app" aria-label="Brainstorm"><svg viewBox="0 0 72 72"><g clip-path="url(#sq)"><path d="M0 0h72v72H0z" fill="#cf422d" /><path d="M26 72v-7h-9V54H6V36C6 18 20 5 37 5c18 0 29 13 29 29 0 10-4 17-11 23v15z" fill="#000" /></g><path d="M38 17L26 39h8l-2 16 14-23h-8z" fill="#fff" /></svg></a>
        <span class="bar"></span>
        <div class="minis">
          <a href="#w1" class="mini" aria-label="Finder window"><svg width="88" height="72" viewBox="0 0 88 72"><rect x="56" y="48" width="28" height="28" rx="6" fill="#3f8df4" /><path d="M71 48h7q6 0 6 6v16q0 6-6 6h-4q-2-6-1-12h-5q0-9 3-16z" fill="#e4e9ef" /><path d="M63 56v3M77 56v3M61 67q9 7 18 0" fill="none" stroke="#1c242c" stroke-width="2" /></svg></a>
          <a href="#w2" class="mini" aria-label="Preview window"><svg width="88" height="72" viewBox="0 0 88 72"><path d="M2 18h84v36H2z" fill="#8f8f8f" /><path d="M2 18h84v8H2z" fill="#e2dfe0" /><path d="M4 22h3" stroke="#e2584e" stroke-width="3" /><path d="M8 22h3" stroke="#62b152" stroke-width="3" /><path d="M20 22h18M44 22h36" stroke="#999" stroke-width="2" stroke-dasharray="4 2" /><rect x="58" y="49" width="26" height="26" rx="5" fill="#f3f3f3" /><rect x="60" y="51" width="22" height="22" rx="4" fill="#9dbbea" /><path d="M60 64h22v6q0 3-3 3H63q-3 0-3-3z" fill="#31426d" /><path d="M72 64h11l3 13H70z" fill="#bfc4c6" /><path d="M72 61h11v5H72z" fill="#1c1c1d" /></svg></a>
          <a href="#w3" class="mini" aria-label="Document window"><svg width="88" height="72" viewBox="0 0 88 72"><path d="M2 10h84v50H2z" fill="#fdfdfd" /><path d="M2 10h84v5H2z" fill="#dedede" /><path d="M2 15h12v45H2z" fill="#d3d3d6" /><path d="M6 19h7v3H6z" fill="#111" /><path d="M5 24h8v10H5zM5 38h8v10H5z" fill="#f5f5f5" /><path d="M22 24h20M22 28h62M22 40h62M22 46h62M22 52h40" stroke="#bbb" stroke-dasharray="8 3" /><path d="M35 29h51v9H35z" fill="#000" /><path d="M15 15v45" stroke="#333" /><rect x="58" y="49" width="26" height="26" rx="5" fill="#f3f3f3" /><rect x="60" y="51" width="22" height="22" rx="4" fill="#9dbbea" /><path d="M60 64h22v6q0 3-3 3H63q-3 0-3-3z" fill="#31426d" /><path d="M72 64h11l3 13H70z" fill="#bfc4c6" /><path d="M72 61h11v5H72z" fill="#1c1c1d" /></svg></a>
          <a href="#trash" class="mini" aria-label="Trash"><svg width="64" height="84" viewBox="0 0 66 84"><path d="M4 14L12 4l8 5 4-8 10 6 9-5 8 10 9 2-6 10H8z" fill="#f3f3f3" stroke="#999" /><path d="M16 9l8 8-4 4zM38 6l4 10 6-2zM46 14l8-4-4 9z" fill="#4b4b52" /><path d="M1 13q32 10 64 0l-8 66q-1 4-7 4H17q-6 0-7-4z" fill="#dededd" opacity=".94" /><path d="M14 24l4 52M52 24l-4 52" stroke="#f3f3f3" stroke-width="4" opacity=".6" /><path d="M1 13q32 10 64 0" fill="none" stroke="#fff" stroke-width="2" /></svg></a>
        </div>
      </nav>
      <svg class="scene" viewBox="0 0 82 120" preserveAspectRatio="none"><path d="M0 0h82v120H0z" fill="#d8cfd0" /><path d="M0 0h26v52H0z" fill="#55504f" /><path d="M4 0h12v20H4z" fill="#2c3436" /><path d="M26 0h30v58H26z" fill="#c3b9b6" /><path d="M30 0h22v20H30z" fill="#3c4244" /><path d="M56 0h16v62H56z" fill="#cbc5bc" /><path d="M72 0h10v58H72z" fill="#b5adab" /><path d="M0 58h72v4H0z" fill="#9c9391" /><path d="M0 108l82-10v22H0z" fill="#c3b6ba" /></svg>
    </div>
  </div>
</template>

<style>
body { margin: 0; }
</style>

<style scoped>
* { box-sizing: border-box; }
.desktop {
  height: 100vh; min-width: 0; display: flex; flex-direction: column; overflow: hidden;
  font-family: Inter, "Liberation Sans", sans-serif; color: #000;
  background: linear-gradient(90deg, #dcb9d0 0 280px, #111 280px 420px, #445 420px 640px, #d488ae 640px 780px, #111 780px 1260px, #999 1260px 1550px, #b57a95 1550px 2050px, #aaa 2050px 2500px, #222 2500px);
}
button { appearance: none; border: 0; background: none; padding: 0; margin: 0; font: inherit; color: inherit; display: flex; align-items: center; }
svg { display: block; flex: none; overflow: visible; }
input, select { font: inherit; color: inherit; }

.menubar {
  flex: none; height: 48px; padding: 0 38px 2px 40px; display: flex; align-items: center; color: #f0eef0; font-size: 26px;
  background: linear-gradient(90deg, #6a5868, #62525c 30%, #65555f 40%, #76646e 68%, #7b6972 85%, #6f5c66);
}
.menus { display: flex; gap: 40px; margin-left: 41px; }
.app-name { font-weight: 700; }
.extras { margin-left: auto; display: flex; align-items: center; gap: 37px; }
.extras time { margin-left: -8px; white-space: nowrap; }
.cc { margin-right: -16px; margin-left: -8px; }

.window { flex: 1; min-height: 0; margin: 2px 0; display: flex; flex-direction: column; border-radius: 20px; overflow: hidden; background: #f3f3f3; }
.titlebar { flex: none; height: 64px; padding: 0 22px; display: flex; align-items: center; background: #387a48; border-top: 2px solid #6ba078; color: #e2ece4; }
.title-left, .title-right { flex: 1; display: flex; align-items: center; }
.lights { display: flex; gap: 14px; margin-left: 3px; }
.light { width: 26px; height: 26px; border-radius: 50%; }
.red { background: #ec6a5e; }
.amber { background: #f4bf50; }
.lime { background: #61c554; }
.autosave { margin-left: 53px; display: flex; align-items: center; gap: 14px; font-size: 21px; font-weight: 500; }
.switch { position: relative; width: 80px; height: 30px; border-radius: 15px; background: #305a3c; display: flex; align-items: center; justify-content: flex-end; padding-right: 16px; }
.switch input { appearance: none; position: absolute; left: 0; top: 2px; margin: 0; width: 26px; height: 26px; border-radius: 50%; background: #fff; }
.off { font-size: 17px; font-weight: 600; }
.quick { display: flex; align-items: center; margin-left: 25px; gap: 22px; }
.quick svg, .title-right svg { fill: none; stroke: #fff; stroke-width: 2; }
.quick .chev { color: #fff; }
.undo { gap: 13px; }
.doc { margin: 0; display: flex; align-items: center; gap: 10px; font-size: 27px; font-weight: 700; white-space: nowrap; }
.doc .chev { color: #6fa17b; }
.title-right { justify-content: flex-end; gap: 36px; }

.tabs { flex: none; height: 62px; display: flex; justify-content: space-between; padding: 0 20px 0 22px; background: #f5f5f5; font-size: 26px; color: #262626; }
.tab-list { display: flex; gap: 49px; }
.tab-list button { height: 56px; border: 0 solid transparent; border-bottom-width: 6px; padding: 9px 0 3px; font-weight: 500; white-space: nowrap; }
.tab-list .on { font-weight: 700; border-bottom-color: #3a7548; }
.tab-list .tell { gap: 16px; margin-left: -14px; }
.actions { display: flex; gap: 20px; padding-top: 8px; font-size: 24px; font-weight: 600; color: #3a7548; }
.actions button { height: 48px; padding: 0 10px 0 14px; gap: 10px; background: #fff; border: 2px solid #d4d4d4; border-radius: 8px; }

.ribbon { flex: none; height: 146px; padding: 6px 0 16px; display: flex; background: linear-gradient(#f5f5f5, #ececec); font-size: 21px; color: #000; }
.group { flex: none; border-right: 2px solid #d2d2d2; height: 124px; }
.group:last-child { border: 0; }
.chev { color: #3a3a3a; }
.row { display: flex; align-items: center; height: 36px; }
.row.tall { height: 48px; margin: 10px 0 22px; }
.gap20 { gap: 20px; }
.gap4 { gap: 4px; }
.inset { padding-left: 6px; }
hr { width: 2px; height: 36px; margin: 0 3px; border: 0; background: #d2d2d2; }
.gap4 hr { margin: 0 12px; }
.split { gap: 14px; }
.ico { width: 32px; display: flex; align-items: center; justify-content: center; font-size: 26px; color: #333; }
.serif { font-family: "Liberation Serif", serif; font-size: 30px; }
.under { text-decoration: underline; text-underline-offset: 5px; text-decoration-thickness: 2px; }
.symbol { font-size: 32px; font-weight: 300; }
.stack { display: flex; flex-direction: column; height: 132px; }
.stack button { height: 44px; }
.clip .stack button { gap: 12px; }
.big { flex-direction: column; align-items: center; margin-top: 9px; height: 118px; justify-content: flex-start; white-space: nowrap; }
.face { display: flex; align-items: center; gap: 12px; height: 60px; }
.cap { margin-top: 10px; line-height: 24px; text-align: center; }
.dim, .dim .chev { color: #8b8b8b; }
.clip { width: 210px; display: flex; padding-left: 34px; gap: 16px; }
.clip .big { align-items: flex-start; }
.clip .cap { padding-left: 6px; }
.clip .face { gap: 10px; }
.fonts { width: 540px; padding-left: 20px; }
.fonts .gap20 { padding-left: 8px; }
.pick { position: relative; height: 48px; font-size: 23px; }
.pick select { appearance: none; width: 100%; height: 48px; padding: 0 11px; border: 2px solid #c6c6c6; border-radius: 8px; background: #fff; }
.pick .chev { position: absolute; right: 9px; top: 19px; pointer-events: none; }
.wide { width: 282px; margin-right: 5px; }
.small { width: 106px; margin-right: 13px; }
.small select { padding: 0 9px; }
.grow { margin-right: 19px; }
.aligns { width: 324px; padding-left: 20px; }
.sq { width: 48px; height: 48px; justify-content: center; }
.pressed { border-radius: 8px; background: #c3c3c3; }
.orient { padding-left: 6px; gap: 11px; }
.wraps { width: 278px; padding-left: 24px; }
.line { gap: 12px; white-space: nowrap; }
.numbers { width: 352px; padding-left: 19px; }
.format { width: 310px; }
.styles { width: 364px; display: flex; padding-left: 24px; gap: 16px; }
.cells { width: 194px; padding-left: 26px; }
.edit { width: 310px; display: flex; padding-left: 26px; gap: 16px; }
.edit .split { gap: 12px; }
.analyze { width: 130px; display: flex; justify-content: center; }
.sens { padding-left: 24px; }

.formula { flex: none; height: 60px; display: flex; align-items: center; background: #fff; border-top: 2px solid #c9c9c9; border-bottom: 2px solid #b5b5b5; box-shadow: inset 0 -4px #fff, inset 0 -6px #a5a5a5; padding: 0 8px 6px 0; color: #262626; }
.name-box { width: 170px; height: 52px; display: flex; align-items: center; border: 2px solid #b2b2b2; padding: 0 8px 0 18px; margin-right: 28px; }
.name-box input { width: 100px; flex: 1; min-width: 0; border: 0; padding: 0; background: none; font-size: 24px; outline: 0; }
.formula button { margin-right: 30px; }
.formula .fx { font: italic 36px/40px "Liberation Serif", serif; color: #444; width: 34px; margin: 0 8px 0 0; }
.entry { flex: 1; min-width: 0; height: 30px; border: 0; border-left: 2px solid #ddd; outline: 0; padding: 0 12px; background: #fff; font-size: 24px; }
.formula button:last-child { margin: 0; }

.grid { flex: 1; min-height: 0; position: relative; overflow: hidden; background: #fff; }
table { table-layout: fixed; width: 2914px; border-collapse: separate; border-spacing: 0; font: 16px/18px "Liberation Sans", Arial, sans-serif; }
th { padding: 0; font-weight: 400; color: #555; }
thead th { width: 80px; height: 34px; padding-top: 2px; border-right: 2px solid #dcdcdc; border-bottom: 2px solid #b5b5b5; background: linear-gradient(#fff, #f6f6f6); }
thead .corner { width: 34px; border-right-color: #b5b5b5; }
.corner svg { margin-left: 9px; }
thead .on { background: #efefef; color: #2f7040; border-bottom: 4px solid #3a7548; padding-top: 4px; }
tbody th { border-right: 2px solid #b5b5b5; border-bottom: 2px solid #ececec; background: #fdfdfd; vertical-align: bottom; line-height: 15px; }
tbody .on { color: #2f7040; background: #f1f1f1; border-right: 3px solid #3a7548; }
td { padding: 0; border-right: 2px solid #d4d4d4; border-bottom: 2px solid #d4d4d4; position: relative; }
.r1 > * { height: 22px; }
.r2 > * { height: 20px; }
.r3 > * { height: 24px; }
.r1 .a { padding-left: 3px; font-weight: 700; font-style: italic; font-size: 15px; vertical-align: bottom; line-height: 16px; }
.boxed { border-color: #000; text-align: right; padding: 2px 4px 0 0; font: 17px/20px "Noto Sans", sans-serif; }
.cap2 { border-bottom-color: #000; }
.picked { position: absolute; left: -4px; top: -4px; width: 86px; height: 30px; border: 4px solid #3a7548; z-index: 2; }
.picked::after { content: ""; position: absolute; right: -8px; bottom: -8px; width: 14px; height: 14px; background: #3a7548; border: 0 solid #fff; border-width: 2px 0 0 2px; }
.vbar { position: absolute; right: 6px; top: 38px; width: 14px; height: 596px; border-radius: 7px; background: rgba(80, 80, 80, .55); z-index: 3; }
.hbar { position: absolute; left: 38px; right: 502px; bottom: 6px; height: 14px; border-radius: 7px; background: rgba(80, 80, 80, .55); z-index: 3; }

.sheets { flex: none; height: 52px; display: flex; background: linear-gradient(#f2f2f2, #eaeaea); border-top: 2px solid #c9c9c9; font-size: 24px; color: #5a5a5a; }
.arrows { width: 121px; display: flex; align-items: center; padding: 0 0 2px 30px; gap: 29px; }
.sheet { width: 158px; height: 44px; justify-content: center; border-right: 2px solid #c9c9c9; padding-top: 4px; }
.sheet.on { margin-top: -2px; height: 47px; padding-top: 6px; background: #fff; color: #3f7e4e; font-weight: 700; border-radius: 0 0 8px 8px; border-left: 2px solid #c9c9c9; border-bottom: 2px solid #a5a5a5; }
.add { width: 77px; height: 44px; justify-content: center; border-right: 2px solid #c9c9c9; padding-top: 2px; }

.status { flex: none; height: 46px; display: flex; align-items: center; justify-content: space-between; border-top: 2px solid #999; background: linear-gradient(#dcdcdc, #bfbfbf); font-size: 24px; color: #4a4a4a; padding-left: 48px; }
.views { margin-left: auto; display: flex; height: 44px; }
.view { width: 72px; justify-content: center; }
.view.on { background: #979797; }
.zoomer { display: flex; align-items: center; gap: 14px; padding: 0 55px 0 16px; }
.zoomer input { appearance: none; width: 200px; height: 32px; margin: 0; background: radial-gradient(circle 4px at 100px 16px, #ddd 4px, transparent 5px), linear-gradient(transparent 12px, #8d8d8d 12px 20px, transparent 20px); }
.zoomer input::-webkit-slider-thumb { appearance: none; width: 32px; height: 32px; border-radius: 50%; background: #f6f6f6; box-shadow: 0 1px 3px rgba(0, 0, 0, .4); }
.zoomer output { margin-left: 27px; font-weight: 300; }

.shore {
  flex: none; height: 132px; margin-top: -2px; padding: 2px 0 10px; display: flex;
  background:
    linear-gradient(90deg, #a8a8a8 98px, #111 98px 162px, #bcbcbc 162px 382px, #d99db9 382px 590px, #b5487e 590px 680px, #dba0bd 680px 913px, #a8a8a8 913px 1029px, #54446a 1029px 1437px, #858487 1437px 1920px, #9aa193 1920px 2029px, #0c0c0c 2029px 2060px, #e6e6e6 2060px 2142px, #0c0c0c 2142px 2225px, #e6e6e6 2225px 2307px, #0c0c0c 2307px 2356px, #5c5457 2356px) bottom / 100% 12px no-repeat,
    linear-gradient(90deg, #777 118px, #111 118px 382px, #8b2f5f 382px 489px, #333 489px 1500px, #111 1500px 2300px, #5a4c50 2300px 2800px, #b5adab 2800px);
}
.scene { flex: 1; min-width: 0; height: 120px; overflow: hidden; }
.dock {
  position: relative; height: 120px; display: flex; align-items: center; gap: 25px; padding: 0 18px 0 16px; border-radius: 34px; border: 2px solid rgba(255, 255, 255, .25);
  background: linear-gradient(90deg, #757575, #7d7c7c 5%, #9a9296 10%, #cfaabf 14%, #dcb2cc 18%, #ccabbf 25%, #b4a6ae 33%, #a994a4 38%, #a691a7 43%, #9f95ab 48%, #9c9a9b 52%, #868b8b 60%, #9a9694 66%, #9c9392 71%, #7f8080 77%, #969294 82%, #aba2aa 88%, #c2b4be);
}
.app { position: relative; width: 72px; height: 72px; margin-bottom: 10px; }
.app > svg { width: 72px; height: 72px; }
.run::after { content: ""; position: absolute; left: 32px; top: 89px; width: 8px; height: 8px; border-radius: 50%; background: #1c151b; }
.app em { position: absolute; right: -11px; top: -9px; width: 34px; height: 34px; border-radius: 50%; background: #e75646; color: #fff; font: 400 20px/34px Inter, sans-serif; text-align: center; }
.bar { width: 2px; height: 88px; margin: 0 9px; background: #605b5f; opacity: .8; }
.minis { display: flex; align-items: center; gap: 8px; margin: 0 0 12px -10px; }
.mini:last-child { margin-left: 16px; }
</style>
